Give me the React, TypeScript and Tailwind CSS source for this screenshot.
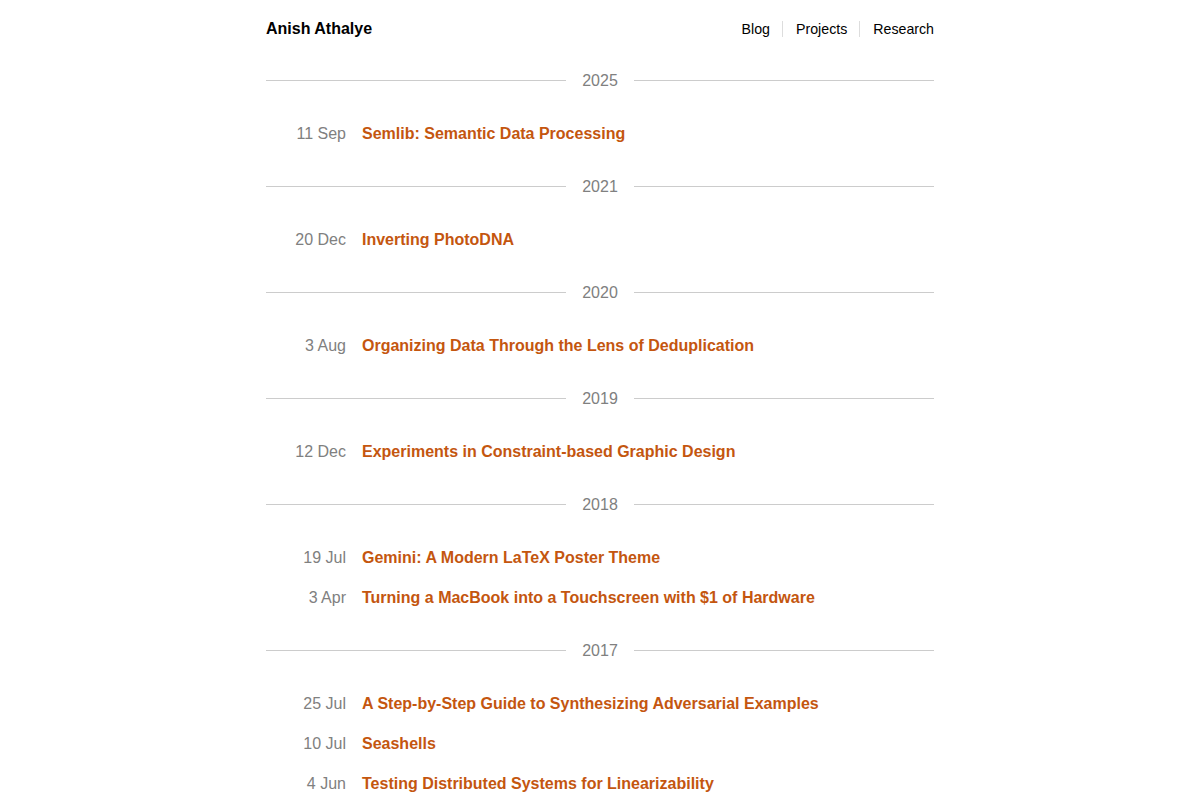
import React from "react";

type Post = { date: string; title: string };
type Year = { year: string; posts: Post[] };

const years: Year[] = [
  { year: "2025", posts: [{ date: "11 Sep", title: "Semlib: Semantic Data Processing" }] },
  { year: "2021", posts: [{ date: "20 Dec", title: "Inverting PhotoDNA" }] },
  { year: "2020", posts: [{ date: "3 Aug", title: "Organizing Data Through the Lens of Deduplication" }] },
  { year: "2019", posts: [{ date: "12 Dec", title: "Experiments in Constraint-based Graphic Design" }] },
  {
    year: "2018",
    posts: [
      { date: "19 Jul", title: "Gemini: A Modern LaTeX Poster Theme" },
      { date: "3 Apr", title: "Turning a MacBook into a Touchscreen with $1 of Hardware" },
    ],
  },
  {
    year: "2017",
    posts: [
      { date: "25 Jul", title: "A Step-by-Step Guide to Synthesizing Adversarial Examples" },
      { date: "10 Jul", title: "Seashells" },
      { date: "4 Jun", title: "Testing Distributed Systems for Linearizability" },
    ],
  },
];

export default function App() {
  return (
    <div
      className="min-h-screen bg-white text-[16px] text-black"
      style={{ fontFamily: '"Liberation Sans", Arial, sans-serif' }}
    >
      <div className="mx-auto w-[668px]">
        <header className="flex h-[47px] items-start justify-between pt-[19px]">
          <a className="text-[16px] font-bold leading-[20px] text-black">Anish Athalye</a>
          <nav className="flex items-center text-[14.2px] leading-[20px]">
            <a className="pr-3 text-black">Blog</a>
            <span className="h-[16px] w-px bg-[#dddddd]" />
            <a className="pl-[13px] pr-3 text-black">Projects</a>
            <span className="h-[16px] w-px bg-[#dddddd]" />
            <a className="pl-[13px] text-black">Research</a>
          </nav>
        </header>

        {years.map((y) => (
          <section key={y.year}>
            <div className="flex h-[66px] items-center">
              <div className="h-px flex-1 bg-[#cccccc]" />
              <span className="px-4 pt-[2px] leading-[20px] text-[#808080]">{y.year}</span>
              <div className="h-px flex-1 bg-[#cccccc]" />
            </div>
            {y.posts.map((p) => (
              <div key={p.title} className="flex h-[40px] items-center pt-[2px]">
                <span className="w-[80px] shrink-0 text-right text-[#808080]">{p.date}</span>
                <a className="pl-4 font-bold text-[#c4560f]">{p.title}</a>
              </div>
            ))}
          </section>
        ))}
      </div>
    </div>
  );
}
